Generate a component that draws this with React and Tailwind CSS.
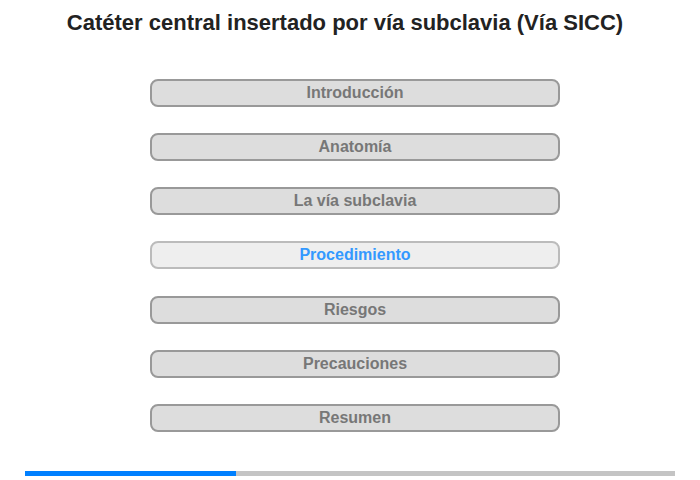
const sections = [
  "Introducción",
  "Anatomía",
  "La vía subclavia",
  "Procedimiento",
  "Riesgos",
  "Precauciones",
  "Resumen",
];

export default function App() {
  const active = "Procedimiento";

  return (
    <div className="w-[700px] h-[480px] bg-white font-['Liberation_Sans',Arial,sans-serif] flex flex-col">
      {/* Title */}
      <h1 className="text-center text-[22px] font-bold text-[#222] pt-[10px] pr-[10px] leading-[26px]">
        Catéter central insertado por vía subclavia (Vía SICC)
      </h1>

      {/* Menu */}
      <div className="flex flex-col gap-[26.17px] mt-[43px] ml-[150px]">
        {sections.map((s) => {
          const isActive = s === active;
          return (
            <button
              key={s}
              className={`w-[410px] h-[28px] rounded-[8px] border-2 text-[16px] font-bold leading-none ${
                isActive
                  ? "bg-[#eeeeee] border-[#bbbbbb] text-[#3399ff]"
                  : "bg-[#dddddd] border-[#999999] text-[#777777]"
              }`}
            >
              {s}
            </button>
          );
        })}
      </div>

      {/* Progress */}
      <div className="mt-auto mb-[4px] mx-[25px] h-[5px] bg-[#c4c4c4] flex">
        <div className="w-[211px] h-full bg-[#0080ff]"></div>
      </div>
    </div>
  );
}
